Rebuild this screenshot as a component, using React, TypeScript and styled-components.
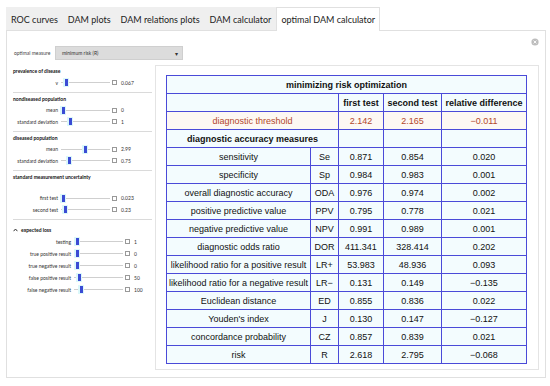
import styled, { createGlobalStyle } from "styled-components";

const GlobalStyle = createGlobalStyle`
  html, body {
    margin: 0;
    padding: 0;
    background: #fff;
  }
  body {
    font-family: Lato, "Open Sans", "Liberation Sans", sans-serif;
    color: #222;
  }
`;

const tabs = ["ROC curves", "DAM plots", "DAM relations plots", "DAM calculator", "optimal DAM calculator"];

type Slide = { label: string; value: string; pos: number };
type Group = { title: string; rows: Slide[]; titleGap?: number; top?: number; rowH?: number; wide?: boolean; last?: boolean };

const groups: Group[] = [
  { title: "prevalence of disease", rows: [{ label: "v", value: "0.067", pos: 5 }] },
  {
    title: "nondiseased population",
    rows: [
      { label: "mean", value: "0", pos: 2 },
      { label: "standard deviation", value: "1", pos: 9 },
    ],
  },
  {
    title: "diseased population",
    rows: [
      { label: "mean", value: "2.99", pos: 24 },
      { label: "standard deviation", value: "0.75", pos: 8 },
    ],
  },
  {
    title: "standard measurement uncertainty",
    titleGap: 12,
    rows: [
      { label: "first test", value: "0.023", pos: 2 },
      { label: "second test", value: "0.23", pos: 4 },
    ],
  },
  {
    title: "expected loss",
    top: 6,
    rowH: 12,
    wide: true,
    last: true,
    rows: [
      { label: "testing", value: "1", pos: 3 },
      { label: "true positive result", value: "0", pos: 3 },
      { label: "true negative result", value: "0", pos: 3 },
      { label: "false positive result", value: "50", pos: 5 },
      { label: "false negative result", value: "100", pos: 7 },
    ],
  },
];

const measures = [
  ["sensitivity", "Se", "0.871", "0.854", "0.020"],
  ["specificity", "Sp", "0.984", "0.983", "0.001"],
  ["overall diagnostic accuracy", "ODA", "0.976", "0.974", "0.002"],
  ["positive predictive value", "PPV", "0.795", "0.778", "0.021"],
  ["negative predictive value", "NPV", "0.991", "0.989", "0.001"],
  ["diagnostic odds ratio", "DOR", "411.341", "328.414", "0.202"],
  ["likelihood ratio for a positive result", "LR+", "53.983", "48.936", "0.093"],
  ["likelihood ratio for a negative result", "LR\u2212", "0.131", "0.149", "\u22120.135"],
  ["Euclidean distance", "ED", "0.855", "0.836", "0.022"],
  ["Youden's index", "J", "0.130", "0.147", "\u22120.127"],
  ["concordance probability", "CZ", "0.857", "0.839", "0.021"],
  ["risk", "R", "2.618", "2.795", "\u22120.068"],
];

export default function App() {
  return (
    <Page>
      <GlobalStyle />
      <TabBar>
        {tabs.map((t, i) => (
          <Tab key={t} $active={i === tabs.length - 1}>
            {t}
          </Tab>
        ))}
      </TabBar>
      <Panel>
        <TopRow>
          <SelectLabel>optimal measure</SelectLabel>
          <Select>
            <span>minimum risk (R)</span>
            <Arrow>▾</Arrow>
          </Select>
          <Close>
            <svg width="8" height="8" viewBox="0 0 8 8">
              <circle cx="4" cy="4" r="3.6" fill="#bdbdbd" />
              <path d="M2.6 2.6 L5.4 5.4 M5.4 2.6 L2.6 5.4" stroke="#fff" strokeWidth="0.9" />
            </svg>
          </Close>
        </TopRow>
        <Body>
          <Sidebar>
            {groups.map((g) => (
              <Section key={g.title} $top={g.top ?? 2} $last={g.last}>
                <SectionTitle $gap={g.titleGap ?? 2}>
                  {g.wide && (
                    <svg width="5" height="4" viewBox="0 0 5 4" style={{ marginRight: 3 }}>
                      <path d="M0.6 3.2 L2.5 1 L4.4 3.2" stroke="#333" strokeWidth="1" fill="none" />
                    </svg>
                  )}
                  {g.title}
                </SectionTitle>
                {g.rows.map((r) => (
                  <SliderRow key={r.label} $h={g.rowH ?? 11.5}>
                    <SliderLabel $w={g.wide ? 58 : 45}>{r.label}</SliderLabel>
                    <Track>
                      <Thumb style={{ left: r.pos - 3 }}>
                        <ThumbBar />
                      </Thumb>
                    </Track>
                    <Box />
                    <SliderValue>{r.value}</SliderValue>
                  </SliderRow>
                ))}
              </Section>
            ))}
          </Sidebar>
          <TablePanel>
            <Table>
              <colgroup>
                <col style={{ width: 144 }} />
                <col style={{ width: 28 }} />
                <col style={{ width: 45 }} />
                <col style={{ width: 58 }} />
                <col style={{ width: 85 }} />
              </colgroup>
              <tbody>
                <tr>
                  <Cell colSpan={5} $bold>
                    minimizing risk optimization
                  </Cell>
                </tr>
                <tr>
                  <Cell colSpan={2} />
                  <Cell $bold>first test</Cell>
                  <Cell $bold>second test</Cell>
                  <Cell $bold>relative difference</Cell>
                </tr>
                <tr>
                  <Cell colSpan={2} $red>
                    diagnostic threshold
                  </Cell>
                  <Cell $red>2.142</Cell>
                  <Cell $red>2.165</Cell>
                  <Cell $red>{"\u22120.011"}</Cell>
                </tr>
                <tr>
                  <Cell colSpan={2} $bold>
                    diagnostic accuracy measures
                  </Cell>
                  <Cell />
                  <Cell />
                  <Cell />
                </tr>
                {measures.map((m) => (
                  <tr key={m[1]}>
                    {m.map((v, i) => (
                      <Cell key={i}>{v}</Cell>
                    ))}
                  </tr>
                ))}
              </tbody>
            </Table>
          </TablePanel>
        </Body>
      </Panel>
    </Page>
  );
}

const Page = styled.div`
  width: 550px;
  height: 386px;
  padding: 7px 4px 0 6px;
  box-sizing: border-box;
  overflow: hidden;
`;

const TabBar = styled.div`
  display: flex;
  height: 23px;
`;

const Tab = styled.div<{ $active?: boolean }>`
  display: flex;
  align-items: center;
  padding: 0 4px;
  font-size: 9px;
  color: #222;
  background: ${(p) => (p.$active ? "#fff" : "#efefef")};
  border: 1px solid ${(p) => (p.$active ? "#e0e0e0" : "transparent")};
  border-bottom: none;
  position: relative;
  z-index: 1;
  margin-bottom: ${(p) => (p.$active ? "-1px" : "0")};
`;

const Panel = styled.div`
  width: 540px;
  height: 348px;
  border: 1px solid #e0e0e0;
  box-sizing: border-box;
  display: flex;
  flex-direction: column;
  padding: 7px 6px 7px 0;
`;

const TopRow = styled.div`
  display: flex;
  align-items: flex-end;
  height: 22px;
  padding-left: 7px;
`;

const SelectLabel = styled.div`
  font-size: 5px;
  color: #444;
  width: 41px;
  line-height: 14px;
`;

const Select = styled.div`
  width: 128px;
  height: 14px;
  box-sizing: border-box;
  background: #dcdcdc;
  border: 1px solid #cfcfcf;
  display: flex;
  align-items: center;
  justify-content: space-between;
  padding: 0 4px 0 6px;
  font-size: 5px;
  color: #333;
`;

const Arrow = styled.span`
  font-size: 6px;
  color: #333;
`;

const Close = styled.div`
  margin-left: auto;
  align-self: flex-start;
  display: flex;
`;

const Body = styled.div`
  display: flex;
  margin-top: 5px;
  flex: 1;
`;

const Sidebar = styled.div`
  width: 150px;
  box-sizing: border-box;
  padding: 0 3px 0 6px;
  display: flex;
  flex-direction: column;
`;

const Section = styled.div<{ $top: number; $last?: boolean }>`
  padding: ${(p) => p.$top}px 0 3px 0;
  border-bottom: ${(p) => (p.$last ? "none" : "1px solid #dadada")};
`;

const SectionTitle = styled.div<{ $gap: number }>`
  display: flex;
  align-items: center;
  height: 8px;
  margin-bottom: ${(p) => p.$gap}px;
  font-size: 5px;
  font-weight: 700;
  color: #111;
`;

const SliderRow = styled.div<{ $h: number }>`
  display: flex;
  align-items: center;
  height: ${(p) => p.$h}px;
  font-size: 5px;
  color: #333;
`;

const SliderLabel = styled.div<{ $w: number }>`
  width: ${(p) => p.$w}px;
  text-align: right;
  white-space: nowrap;
  margin-right: 3px;
`;

const Track = styled.div`
  position: relative;
  width: 49px;
  height: 1px;
  background: #cfcfcf;
  margin-right: 2px;
`;

const Thumb = styled.div`
  position: absolute;
  top: -4px;
  width: 6px;
  height: 9px;
  background: #dcf8fa;
  display: flex;
  align-items: center;
  justify-content: center;
`;

const ThumbBar = styled.div`
  width: 3px;
  height: 7px;
  background: #3a4bd4;
`;

const Box = styled.div`
  width: 3px;
  height: 3px;
  border: 0.6px solid #999;
  margin-right: 4px;
`;

const SliderValue = styled.div`
  font-size: 5px;
  color: #333;
`;

const TablePanel = styled.div`
  flex: 1;
  border: 1px solid #e4e4e4;
  box-sizing: border-box;
  padding: 9px 11px 0 10px;
`;

const Table = styled.table`
  border-collapse: collapse;
  table-layout: fixed;
  width: 360px;
  font-family: "Liberation Sans", Arial, sans-serif;
  font-size: 9px;
  color: #111;
  background: #f3fcfe;
  border: 1px solid #4a4ad8;
`;

const Cell = styled.td<{ $bold?: boolean; $red?: boolean }>`
  height: 17px;
  padding: 0;
  border: 1px solid #4a4ad8;
  text-align: center;
  white-space: nowrap;
  font-weight: ${(p) => (p.$bold ? 700 : 400)};
  color: ${(p) => (p.$red ? "#b3472c" : "#111")};
  background: ${(p) => (p.$red ? "#fdf8f3" : "transparent")};
`;
